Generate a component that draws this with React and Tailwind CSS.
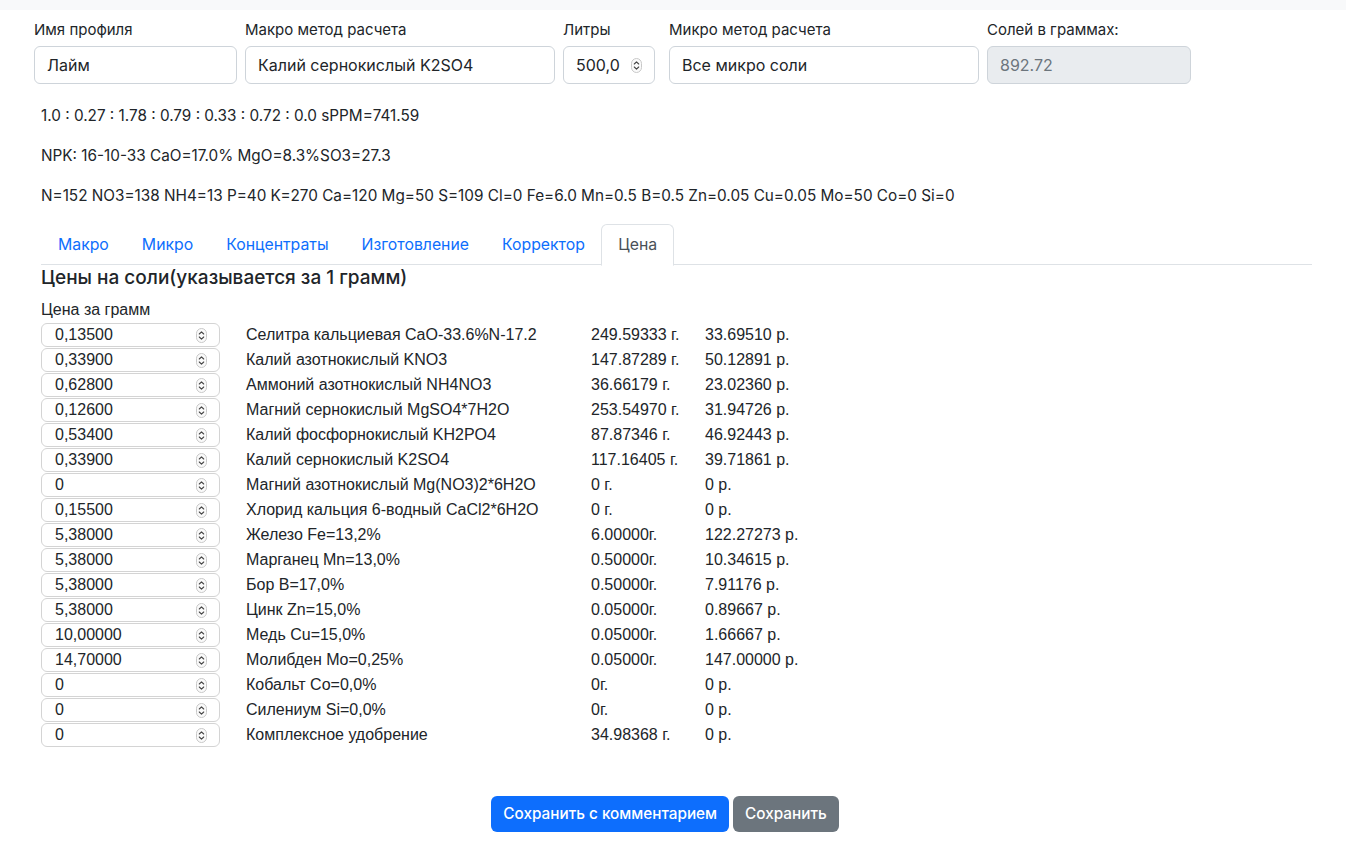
import React from 'react';

const rows = [
  ['0,13500', 'Селитра кальциевая CaO-33.6%N-17.2', '249.59333 г.', '33.69510 р.'],
  ['0,33900', 'Калий азотнокислый KNO3', '147.87289 г.', '50.12891 р.'],
  ['0,62800', 'Аммоний азотнокислый NH4NO3', '36.66179 г.', '23.02360 р.'],
  ['0,12600', 'Магний сернокислый MgSO4*7H2O', '253.54970 г.', '31.94726 р.'],
  ['0,53400', 'Калий фосфорнокислый KH2PO4', '87.87346 г.', '46.92443 р.'],
  ['0,33900', 'Калий сернокислый K2SO4', '117.16405 г.', '39.71861 р.'],
  ['0', 'Магний азотнокислый Mg(NO3)2*6H2O', '0 г.', '0 р.'],
  ['0,15500', 'Хлорид кальция 6-водный CaCl2*6H2O', '0 г.', '0 р.'],
  ['5,38000', 'Железо Fe=13,2%', '6.00000г.', '122.27273 р.'],
  ['5,38000', 'Марганец Mn=13,0%', '0.50000г.', '10.34615 р.'],
  ['5,38000', 'Бор B=17,0%', '0.50000г.', '7.91176 р.'],
  ['5,38000', 'Цинк Zn=15,0%', '0.05000г.', '0.89667 р.'],
  ['10,00000', 'Медь Cu=15,0%', '0.05000г.', '1.66667 р.'],
  ['14,70000', 'Молибден Mo=0,25%', '0.05000г.', '147.00000 р.'],
  ['0', 'Кобальт Co=0,0%', '0г.', '0 р.'],
  ['0', 'Силениум Si=0,0%', '0г.', '0 р.'],
  ['0', 'Комплексное удобрение', '34.98368 г.', '0 р.'],
];

const tabs = ['Макро', 'Микро', 'Концентраты', 'Изготовление', 'Корректор'];

function Spinner() {
  return (
    <svg width="11" height="15" viewBox="0 0 11 15" className="shrink-0">
      <rect x="0.5" y="0.5" width="10" height="14" rx="5" fill="#fafafa" stroke="#c8c8c8" />
      <path d="M3.3 6 L5.5 3.8 L7.7 6" fill="none" stroke="#444" strokeWidth="1.1" strokeLinecap="round" strokeLinejoin="round" />
      <path d="M3.3 9 L5.5 11.2 L7.7 9" fill="none" stroke="#444" strokeWidth="1.1" strokeLinecap="round" strokeLinejoin="round" />
    </svg>
  );
}

function Field({ label, value, w, spin, disabled }) {
  return (
    <div className={`flex flex-col ${w}`}>
      <label className="text-[15px] leading-6 text-[#212529] h-[30px] pt-[2px]">{label}</label>
      <div
        className={`h-[38px] rounded-[6px] border border-[#ced4da] px-[12px] flex items-center justify-between text-[16px] ${
          disabled ? 'bg-[#e9ecef] text-[#6c757d]' : 'bg-white text-[#212529]'
        }`}
      >
        <span>{value}</span>
        {spin && <Spinner />}
      </div>
    </div>
  );
}

export default function App() {
  return (
    <div className="min-h-screen bg-white text-[#212529] font-['Inter',sans-serif]">
      <div className="w-[1346px] h-[10px] bg-[#f8f9fa]" />
      <div className="pl-[34px] pt-[6px] flex">
        <Field label="Имя профиля" value="Лайм" w="w-[203px] mr-[8px]" />
        <Field label="Макро метод расчета" value="Калий сернокислый K2SO4" w="w-[310px] mr-[8px]" />
        <Field label="Литры" value="500,0" w="w-[92px] mr-[14px]" spin />
        <Field label="Микро метод расчета" value="Все микро соли" w="w-[310px] mr-[8px]" />
        <Field label="Солей в граммах:" value="892.72" w="w-[204px]" disabled />
      </div>

      <div className="pl-[41px] pt-[20px] text-[15.3px] leading-6 flex flex-col gap-[16px]">
        <p>1.0 : 0.27 : 1.78 : 0.79 : 0.33 : 0.72 : 0.0 sPPM=741.59</p>
        <p>NPK: 16-10-33 CaO=17.0% MgO=8.3%SO3=27.3</p>
        <p>N=152 NO3=138 NH4=13 P=40 K=270 Ca=120 Mg=50 S=109 Cl=0 Fe=6.0 Mn=0.5 B=0.5 Zn=0.05 Cu=0.05 Mo=50 Co=0 Si=0</p>
      </div>

      <div className="ml-[41px] mt-[16px] w-[1271px] flex border-b border-[#dee2e6] h-[41px]">
        {tabs.map((t) => (
          <div key={t} className="px-[16.5px] first:pl-[17px] flex items-center text-[15.8px] text-[#0d6efd] h-[41px]">
            {t}
          </div>
        ))}
        <div className="px-[16px] flex items-center text-[15.8px] text-[#495057] h-[42px] bg-white border border-[#dee2e6] border-b-white rounded-t-[6px]">
          Цена
        </div>
      </div>

      <div className="pl-[41px]">
        <h5 className="text-[19px] font-medium leading-[24px] mt-[1px] mb-[10px]">Цены на соли(указывается за 1 грамм)</h5>
        <div className="text-[16px] leading-[20px] font-['Liberation_Sans',Arial,sans-serif]">Цена за грамм</div>
        <div className="flex flex-col gap-[1px] mt-[3px] font-['Liberation_Sans',Arial,sans-serif] text-[16px]">
          {rows.map((r, i) => (
            <div key={i} className="flex items-center h-[24px]">
              <div className="w-[179px] h-[24px] rounded-[6px] border border-[#d4d4d4] flex items-center justify-between pl-[13px] pr-[12px] shrink-0">
                <span>{r[0]}</span>
                <Spinner />
              </div>
              <div className="ml-[26px] w-[345px]">{r[1]}</div>
              <div className="w-[114px]">{r[2]}</div>
              <div>{r[3]}</div>
            </div>
          ))}
        </div>
      </div>

      <div className="w-[1330px] flex justify-center gap-[4px] mt-[49px]">
        <button className="h-[36px] px-[12px] rounded-[6px] bg-[#0d6efd] text-white text-[15.3px] font-medium">
          Сохранить с комментарием
        </button>
        <button className="h-[36px] px-[12px] rounded-[6px] bg-[#6c757d] text-white text-[15.3px] font-medium">
          Сохранить
        </button>
      </div>
    </div>
  );
}
